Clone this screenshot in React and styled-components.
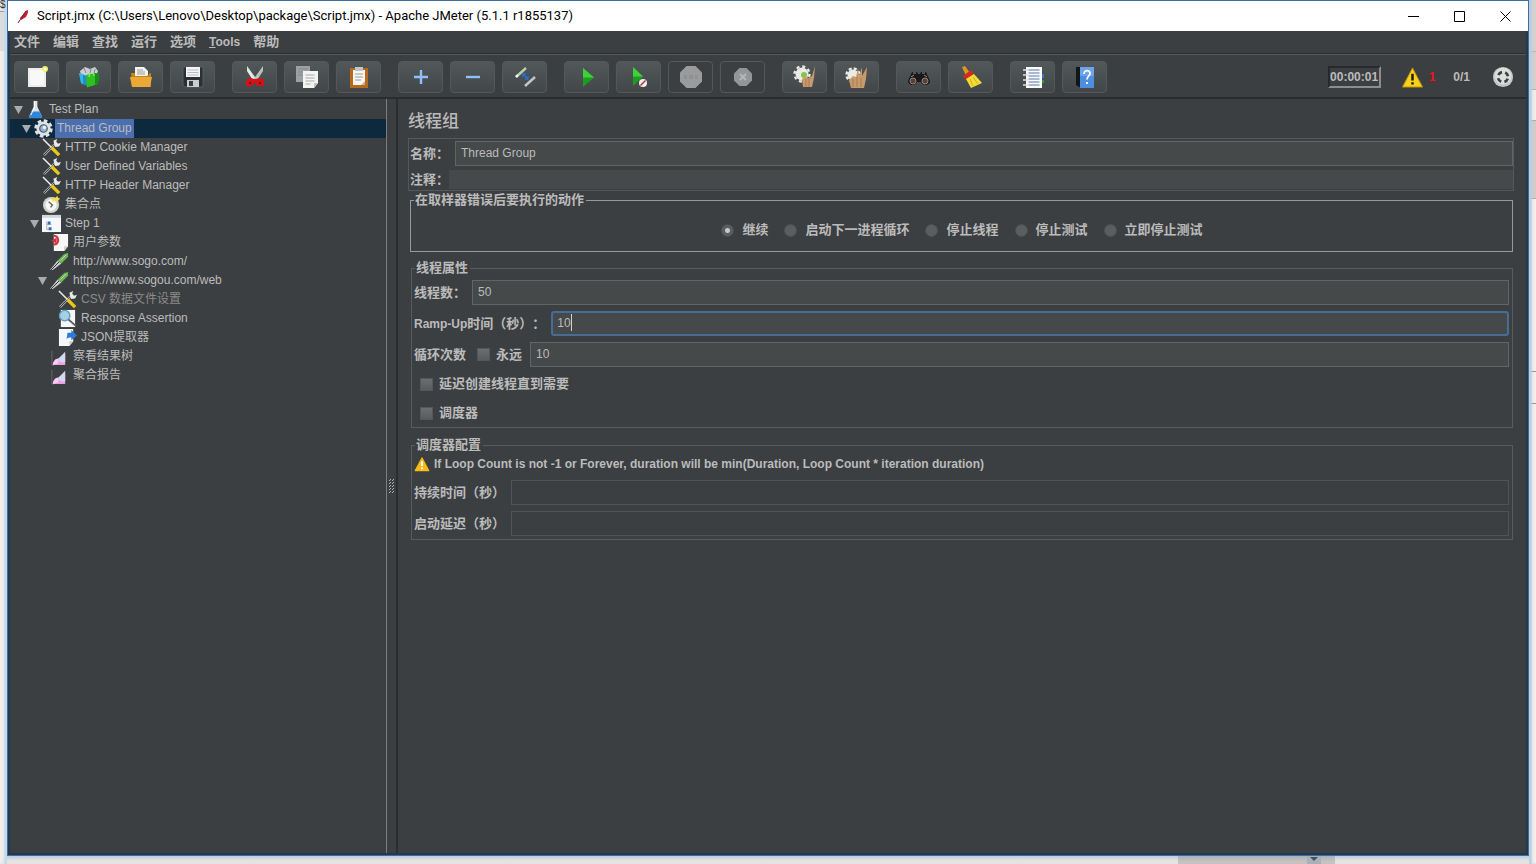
import styled, { createGlobalStyle, css } from "styled-components";
import { useState } from "react";

const GlobalStyle = createGlobalStyle`
  *, *::before, *::after {
    box-sizing: border-box;
  }
  html, body, #root {
    height: 100%;
    margin: 0;
  }
  body {
    overflow: hidden;
    background: #efe8e6;
    color: #bbbbbb;
    font-family: "Liberation Sans", "Noto Sans CJK SC", sans-serif;
    font-size: 12px;
    line-height: 18px;
    text-spacing-trim: space-all;
  }
  button, input {
    font: inherit;
    color: inherit;
    margin: 0;
  }
  svg {
    flex: none;
  }
`;

/* desktop behind the window */

const Desktop = styled.div`
  height: 100%;
  display: grid;
  grid-template-columns: 7px 1fr 7px;
  grid-template-rows: 1fr 8px;
`;

const LeftStrip = styled.div`
  grid-row: 1 / 3;
  background: linear-gradient(#e4e4e4 0 11px, #9a9a9a 11px 12px, #dcdcdc 12px 51px, #f3ece9 51px);
  box-shadow: inset -3px 0 2px #c3d9ea;
  overflow: hidden;
  color: #333;
  font-size: 10px;
  line-height: 9px;
`;

const RightStrip = styled.div`
  grid-column: 3;
  grid-row: 1 / 3;
  box-shadow: inset 3px 0 2px #b9cfe2;
  background: linear-gradient(
    #d6d0ce 0 51px, #bdb8b8 51px 52px, #d4cecc 52px 89px, #b4b0b0 89px 90px,
    #f0ecea 90px 120px, #aeaaaa 120px 121px, #d2cbc8 121px 198px, #aeaaaa 198px 199px,
    #f5edea 199px 371px, #8f9295 371px 372px, #f5edea 372px 403px, #8f9295 403px 404px, #f5edea 404px
  );
`;

const BottomStrip = styled.div`
  grid-column: 2;
  display: flex;
  justify-content: flex-end;
  padding-right: 194px;
  background: linear-gradient(#bccde0, #e6e2e2 60%);
`;

const ScrollTrack = styled.div`
  width: 157px;
  display: flex;
  justify-content: flex-end;
  padding-right: 14px;
  background: linear-gradient(#a4b2c4, #c9c1be 70%);
`;

const ScrollThumb = styled.div`
  width: 14px;
  display: flex;
  justify-content: center;
  background: #aab0b8;
`;

/* window */

const Window = styled.div`
  grid-column: 2;
  grid-row: 1;
  min-width: 0;
  min-height: 0;
  display: flex;
  flex-direction: column;
  border: 1px solid #3f6c98;
`;

const TitleBar = styled.header`
  height: 30px;
  flex: none;
  display: flex;
  align-items: center;
  background: #fff;
  color: #000;
  padding-left: 8px;
  gap: 8px;
`;

const TitleText = styled.h1`
  flex: 1;
  margin: 0;
  font: 400 13px/18px Roboto, "Noto Sans CJK SC", sans-serif;
`;

const WindowButton = styled.button`
  width: 46px;
  height: 28px;
  padding: 0;
  border: none;
  background: none;
  display: flex;
  align-items: center;
  justify-content: center;
`;

const WindowButtons = styled.div`
  display: flex;
`;

const Body = styled.div`
  flex: 1;
  min-height: 0;
  display: flex;
  flex-direction: column;
  background: #3c3f41;
  border: 2px solid #213a50;
  border-top: none;
`;

const MenuBar = styled.nav`
  height: 23px;
  flex: none;
  display: flex;
  align-items: center;
  gap: 13px;
  padding-left: 4px;
  border-bottom: 1px solid #2b2d2e;
`;

const MenuItem = styled.button`
  padding: 0;
  border: none;
  background: none;
  font-weight: bold;
  font-size: ${(props) => (props.$latin ? "12px" : "13px")};
  line-height: 18px;
`;

const ToolBar = styled.div`
  height: 45px;
  flex: none;
  display: flex;
  align-items: center;
  gap: 17px;
  padding: 2px 12px 0 4px;
  border-top: 1px solid #595c5e;
  border-bottom: 2px solid #2a2c2e;
`;

const ToolGroup = styled.div`
  display: flex;
  gap: 7px;
`;

const ToolButton = styled.button`
  width: 45px;
  height: 32px;
  padding: 0;
  display: flex;
  align-items: center;
  justify-content: center;
  border: 1px solid #55585a;
  border-radius: 4px;
  background: linear-gradient(#525759, #434749);
  &:disabled {
    background: #3c3f41;
  }
`;

const Status = styled.div`
  margin-left: auto;
  display: flex;
  align-items: center;
  font-weight: bold;
`;

const Timer = styled.output`
  height: 22px;
  width: 53px;
  text-align: center;
  line-height: 19px;
  border: 2px solid;
  border-color: #27292a #8b8d8e #8b8d8e #27292a;
  margin-right: 20px;
`;

const ErrorCount = styled.span`
  margin: 0 18px 0 5px;
  color: #f0101c;
`;

const ThreadCount = styled.span`
  margin-right: 22px;
`;

const Main = styled.div`
  flex: 1;
  min-height: 0;
  display: grid;
  grid-template-columns: 376px 12px 1fr;
`;

/* test plan tree */

const Tree = styled.ul`
  margin: 0;
  padding: 1px 0 0;
  list-style: none;
`;

const TreeRow = styled.li`
  height: 19px;
  display: flex;
  align-items: center;
  padding-left: ${(props) => 3 + props.$level * 8}px;
  background: ${(props) => (props.$selected ? "#0d293e" : "none")};
`;

const ArrowSlot = styled.span`
  width: 13px;
  flex: none;
  display: flex;
`;

const IconSlot = styled.span`
  width: 19px;
  flex: none;
  display: flex;
  justify-content: center;
`;

const NodeName = styled.span`
  margin-left: 2px;
  padding: 0 2px;
  line-height: 19px;
  white-space: nowrap;
  color: ${(props) => (props.$disabled ? "#8a8a8a" : "#bbbbbb")};
  ${(props) => props.$selected && css`
    background: #4b6eaf;
  `}
`;

const Splitter = styled.div`
  display: flex;
  align-items: center;
  justify-content: center;
  padding-top: 20px;
  border-left: 1px solid #7b7d7f;
  border-right: 2px solid #2a2c2e;
`;

/* thread group editor */

const Editor = styled.main`
  min-width: 0;
  padding: 0 12px 0 10px;
`;

const EditorTitle = styled.h2`
  margin: 0;
  height: 39px;
  font-size: 17px;
  font-weight: 500;
  line-height: 46px;
`;

const NameBox = styled.div`
  display: flex;
  flex-direction: column;
  gap: 4px;
  padding: 2px 0 1px 1px;
  border: 1px solid #55585a;
`;

const FieldRow = styled.div`
  display: flex;
  align-items: center;
  gap: ${(props) => (props.$tight ? "0" : "6px")};
`;

const label = css`
  font-size: 13px;
  font-weight: bold;
  line-height: 18px;
  white-space: nowrap;
`;

const Label = styled.label`
  ${label}
`;

const Latin = styled.span`
  font-size: 12px;
`;

const TextField = styled.input`
  flex: 1;
  min-width: 0;
  height: ${(props) => (props.$flat ? "19px" : "25px")};
  padding: 0 5px 2px;
  outline: none;
  border: 1px solid ${(props) => (props.$flat ? "#45494a" : "#646464")};
  background: #45494a;
  &:disabled {
    background: #3c3f41;
    border-color: #505355;
  }
`;

const FocusedField = styled.div`
  flex: 1;
  height: 25px;
  display: flex;
  align-items: center;
  padding: 0 0 2px 4px;
  border: 2px solid #466d94;
  border-radius: 3px;
  background: #45494a;
`;

const BareInput = styled.input`
  field-sizing: content;
  padding: 0;
  border: none;
  outline: none;
  background: none;
  caret-color: transparent;
`;

const Caret = styled.span`
  width: 1px;
  height: 17px;
  background: #d0d0d0;
`;

const Group = styled.fieldset`
  min-width: 0;
  margin: 0 1px ${(props) => (props.$strong ? "7px 2px" : "8px 3px")};
  padding: 0 3px 3px 2px;
  border: 1px solid ${(props) => (props.$strong ? "#97999b" : "#585b5d")};
`;

const Legend = styled.legend`
  ${label}
  margin-left: 1px;
  padding: 0 2px 0 1px;
`;

const RadioRow = styled.div`
  display: flex;
  justify-content: center;
  gap: 16px;
  padding: 12px 0 9px 2px;
`;

const OptionLabel = styled.label`
  ${label}
  display: flex;
  align-items: center;
  gap: ${(props) => (props.$radio ? "8px" : "6px")};
`;

const Radio = styled.input`
  appearance: none;
  width: 13px;
  height: 13px;
  border-radius: 50%;
  border: 1px solid #4c5052;
  background: #5a5e60;
  &:checked {
    background: radial-gradient(circle, #c8c8c8 0 2px, #5a5e60 3px);
  }
`;

const CheckBox = styled.input`
  appearance: none;
  width: 13px;
  height: 13px;
  border: 1px solid #54585a;
  background: linear-gradient(#6a6e70, #585c5e);
`;

const Rows = styled.div`
  display: flex;
  flex-direction: column;
  gap: 6px;
  padding-top: ${(props) => (props.$top ? "3px" : "0")};
`;

const Checks = styled.div`
  display: flex;
  flex-direction: column;
  gap: 11px;
  padding: 2px 0 2px 6px;
`;

const LoopCheck = styled(OptionLabel)`
  margin: 0 2px 0 5px;
`;

const Warning = styled.p`
  margin: 0;
  height: 20px;
  display: flex;
  align-items: center;
  gap: 4px;
  font-weight: bold;
`;

/* icons */

const Svg = ({ size = 24, children, box = 24 }) => (
  <svg width={size} height={size} viewBox={`0 0 ${box} ${box}`} fill="none" aria-hidden="true">
    {children}
  </svg>
);

const icons = {
  new: (
    <>
      <path d="M3 3h18v19H3z" fill="#ececea" />
      <path d="M5 5h14v15H5z" fill="#f8f8f6" />
      <circle cx="20" cy="4" r="3" fill="#f2ee6a" />
      <circle cx="20" cy="4" r="1.3" fill="#fff" />
    </>
  ),
  templates: (
    <>
      <path d="M3 6l5-4 5 2 5-2 3 4-2 5H4z" fill="#c9ced2" />
      <path d="M7 3l2 5M14 3l-1 6M18 4l-1 5" stroke="#7f8890" />
      <path d="M2 8l8 3v10l-6-3z" fill="#1e8fc9" />
      <path d="M2 8l4 1.5v10L4 18z" fill="#35b6e2" />
      <path d="M9 10l10-2 3 1-1 10-11 3.500z" fill="#2fc01f" />
      <path d="M18 8l4 1-1 10-3 1z" fill="#178c18" />
      <path d="M12 12c0-5 5-6 5-1" stroke="#a9f08e" />
    </>
  ),
  open: (
    <>
      <path d="M6 2h9l4 4v8H6z" fill="#f4f4f2" />
      <path d="M8 5h6M8 7h8M8 9h8" stroke="#9a9a9a" />
      <path d="M2 8h4v3h12l3-3h1v14H3z" fill="#c98212" />
      <path d="M1 12h22l-2 10H3z" fill="#eaa837" />
    </>
  ),
  save: (
    <>
      <path d="M2 2h20v20H4l-2-2z" fill="#2b3035" stroke="#565c62" />
      <path d="M5 2h14v10H5z" fill="#f4f4f4" />
      <path d="M6.500 5h11M6.500 7.500h11M6.500 10h11" stroke="#b8bcc0" />
      <path d="M6 15h12v7H6z" fill="#c9cdd0" />
      <path d="M8 16h4v5H8z" fill="#3a3e42" />
    </>
  ),
  cut: (
    <>
      <path d="M4 1l10 14-3 2L4 6z" fill="#e4e9e4" />
      <path d="M20 1L10 15l3 2 7-11z" fill="#b8c2bd" />
      <path d="M11 14l-3-1c-4 0-6 3-5 7 3 3 8 1 9-3 1 4 6 6 9 3 1-4-1-7-5-7l-3 1z" fill="#d4121a" />
      <circle cx="7" cy="18" r="1.200" fill="#7a1216" />
      <circle cx="17" cy="18" r="1.200" fill="#7a1216" />
    </>
  ),
  copy: (
    <>
      <path d="M1 1h14v16H1z" fill="#9da1a3" />
      <path d="M3 4h10M3 7h10M3 10h5" stroke="#85898b" />
      <path d="M8 6h15v12l-4 5H8z" fill="#f3f3f1" />
      <path d="M10.500 10h9M10.500 13h9M10.500 16h9M10.500 19h5" stroke="#a7aaac" />
      <path d="M23 18h-4v5z" fill="#bfc2c4" />
    </>
  ),
  paste: (
    <>
      <path d="M3 3h18v20H3z" fill="#b8691c" />
      <path d="M6 5h12v15H6z" fill="#f6f6f2" />
      <path d="M8 2h8v4H8z" fill="#c3c7c9" />
      <path d="M8 9h8M8 12h8M8 15h6" stroke="#9a9d9f" />
      <path d="M18 16l-4 4h4z" fill="#b5b5b0" />
    </>
  ),
  plus: <path d="M12 5v14M5 12h14" stroke="#8fc0fa" strokeWidth="2.400" />,
  minus: <path d="M5 12h14" stroke="#8fc0fa" strokeWidth="2.400" />,
  toggle: (
    <>
      <path d="M3 12L13 3" stroke="#b9cfae" strokeWidth="2.400" />
      <path d="M3 12l2-2" stroke="#f4f4f4" strokeWidth="2.400" />
      <path d="M12 21L22 12" stroke="#c3c8c6" strokeWidth="2.400" />
      <path d="M10 9l5 5M15 11v3h-3M10 12V9h3" stroke="#2c6fd0" strokeWidth="1.400" />
    </>
  ),
  start: (
    <>
      <path d="M8 3l11 9.500L8 22z" fill="#18a01e" />
      <path d="M8 3l11 9.500H8z" fill="#42cf3c" />
    </>
  ),
  startNoPause: (
    <>
      <path d="M6 2l10 9.500L6 21z" fill="#18a01e" />
      <path d="M6 2l10 9.500H6z" fill="#42cf3c" />
      <circle cx="16" cy="18" r="4" fill="#eeeeee" />
      <path d="M13.500 20.500l5-5" stroke="#c02a2a" strokeWidth="1.400" />
    </>
  ),
  stop: (
    <>
      <path d="M7.500 1h9L23 7.500v9L16.500 23h-9L1 16.500v-9z" fill="#999b9c" />
      <path d="M5 10h3v4H5zM10 10h4v4h-4zM16 10h3v4h-3z" fill="#8f9192" />
    </>
  ),
  shutdown: (
    <>
      <path d="M8.500 3h7l5.500 5.500v7L15.500 21h-7L3 15.500v-7z" fill="#939596" />
      <path d="M9 9l6 6M15 9l-6 6" stroke="#b4b6b7" strokeWidth="2" />
    </>
  ),
  clear: (
    <>
      <circle cx="9" cy="9" r="6.500" fill="#e8ebe6" />
      <circle cx="9" cy="9" r="7.500" stroke="#e8ebe6" strokeWidth="2.400" strokeDasharray="3 2.900" />
      <circle cx="11" cy="10" r="3" fill="#8bc34a" />
      <path d="M9 14l3-2 4 1 3-2 3-10-1 12-2 9h-9z" fill="#c79a6b" />
      <path d="M13 14v8M16 13v9" stroke="#a87c50" />
    </>
  ),
  clearAll: (
    <>
      <circle cx="8" cy="10" r="5.500" fill="#e8ebe6" />
      <circle cx="8" cy="10" r="6.500" stroke="#e8ebe6" strokeWidth="2.400" strokeDasharray="3 2.100" />
      <path d="M4 15l4-4 3 1 2-9 1 8 3-9v9l5-9-1 12-2 9H6z" fill="#c79a6b" />
      <path d="M8 14v8M12 12v10M16 13v9" stroke="#a87c50" />
    </>
  ),
  search: (
    <>
      <path d="M5 7h5l1 2h2l1-2h5l4 9c0 5-8 5-9 1h-4c-1 4-9 4-9-1z" fill="#18191a" />
      <path d="M6 8h3M15 8h3M4 12l3-2M20 12l-3-2" stroke="#8b8d8e" />
      <circle cx="6" cy="16" r="3" fill="#5b4038" stroke="#9a8278" />
      <circle cx="18" cy="16" r="3" fill="#5b4038" stroke="#9a8278" />
    </>
  ),
  broom: (
    <>
      <path d="M3 2l3-1 5 7-4 3z" fill="#dc9526" />
      <path d="M4 11l8-6 3 4-8 6z" fill="#d22b1c" />
      <path d="M7 14l8-5 8 9-11 5z" fill="#f4dc35" />
      <path d="M11 14l3 7M14 12l5 7" stroke="#cfae18" />
    </>
  ),
  functions: (
    <>
      <path d="M5 2h16v21H5z" fill="#fafafa" />
      <path d="M7.500 5h11M7.500 8h11M7.500 11h11M7.500 14h11M7.500 17h11M7.500 20h11" stroke="#5577aa" />
      <path d="M2 5h5M2 10h5M2 15h5M2 20h5" stroke="#e0e0e0" strokeWidth="1.600" />
      <path d="M21 9h2v4h-2z" fill="#2478d0" />
      <path d="M21 15h2v3h-2z" fill="#2c9a3a" />
    </>
  ),
  help: (
    <>
      <path d="M3 2h5v21l-5-3z" fill="#11161c" />
      <path d="M7 2h14v21H7z" fill="#4e8ede" />
      <path d="M7 2h14v9H7z" fill="#6ba4ea" />
      <path d="M11 9c0-5 7-4 6 0-.5 2-3 2-3 5.500M14 17v2" stroke="#fff" strokeWidth="1.800" />
    </>
  ),
};

const Feather = () => (
  <Svg size={13} box={13}>
    <path d="M11 0c2 0 1 3-1 7L5 10 4 8z" fill="#c61f2d" />
    <path d="M10 1L2 13" stroke="#6b1e3a" />
  </Svg>
);

const Alert = ({ size }) => (
  <Svg size={size}>
    <path d="M12 2l10.500 20h-21z" fill="#f6d21b" stroke="#b98d08" strokeLinejoin="round" />
    <path d="M12 8v7M12 17v2.400" stroke="#1d1a0c" strokeWidth="2.600" />
  </Svg>
);

const LightAlert = () => (
  <Svg size={16}>
    <path d="M12 3l10 19H2z" fill="#fbb917" stroke="#fbb917" strokeWidth="2" strokeLinejoin="round" />
    <path d="M12 8v7M12 17v3" stroke="#fff" strokeWidth="2.800" />
  </Svg>
);

const Grip = () => (
  <svg width="7" height="17" viewBox="0 0 7 17" aria-hidden="true">
    <path
      d="M1 3l2-2M4 3l2-2M1 6l2-2M4 6l2-2M1 9l2-2M4 9l2-2M1 12l2-2M4 12l2-2M1 15l2-2M4 15l2-2"
      stroke="#b0b2b3"
    />
  </svg>
);

const RemoteIcon = () => (
  <Svg size={22}>
    <circle cx="12" cy="12" r="11" fill="#c6c8c8" />
    <circle cx="12" cy="11" r="9" fill="#dddede" />
    <circle cx="12" cy="12" r="5.500" stroke="#3c4142" strokeWidth="3" strokeDasharray="5 3.640" strokeDashoffset="-1.820" />
  </Svg>
);

const nodeIcons = {
  plan: (
    <>
      <path d="M8 1h4v6l5 11-2 1H5l-2-1L8 7z" fill="#d9e4ec" />
      <path d="M6 12h8l3 6-2 1H5l-2-1z" fill="#2d86dc" />
      <path d="M9 1v7l-4 8" stroke="#fff" />
    </>
  ),
  gear: (
    <>
      <circle cx="10" cy="10" r="7.500" fill="#dfe3e6" />
      <circle cx="10" cy="10" r="8.200" stroke="#dfe3e6" strokeWidth="3" strokeDasharray="3.800 2.640" />
      <circle cx="10" cy="10" r="4" fill="#8fb4d8" stroke="#4d5a68" strokeWidth="1.200" />
      <circle cx="11" cy="9" r="1.800" fill="#e8f3fc" />
    </>
  ),
  tools: (
    <>
      <path d="M2 18L14 6" stroke="#a9adb0" strokeWidth="2.400" />
      <path d="M1.500 18.500L13 7" stroke="#34383a" />
      <path d="M13 7l-1-4 4-2-1 3 2 2 3-1-2 4-4 .5z" fill="#e8eaeb" />
      <path d="M1 1l9 9" stroke="#eceeee" strokeWidth="1.600" />
      <path d="M10 10l8 8" stroke="#e8c81e" strokeWidth="3.600" />
    </>
  ),
  timer: (
    <>
      <circle cx="9.500" cy="10.500" r="8.500" fill="#d2d2ce" />
      <circle cx="9.500" cy="10.500" r="6" fill="#f6f6f2" />
      <path d="M7 7l4 3.500L9 13" stroke="#60605c" strokeWidth="1.400" />
      <path d="M11 2l3 1 2-2 1 2 2 1-2 2v2l-3-2-3 1z" fill="#f2df4c" />
    </>
  ),
  controller: (
    <>
      <path d="M0 1h20v18H0z" fill="#f7f8fa" />
      <path d="M0 1h20v3H0z" fill="#cfd6df" />
      <path d="M5 8v9M5 11h5M5 16h5" stroke="#a5b4c6" />
      <path d="M6 8h3v3H6zM7 14h3v3H7z" fill="#2d6fc0" />
    </>
  ),
  userParams: (
    <>
      <path d="M4 1h15v13l-4 5H4z" fill="#f8f7f7" />
      <path d="M19 14h-4v5z" fill="#c7c9cc" />
      <path d="M4 3c6-1 6 10 0 9" stroke="#cc3c46" strokeWidth="2.400" />
      <path d="M1 8l6-3v6z" fill="#d8303b" />
    </>
  ),
  sampler: (
    <>
      <path d="M0 19l8-10 4 3-9 7z" fill="#c9cecb" />
      <path d="M1 19L10 10" stroke="#2e3233" />
      <path d="M8 9l7-7 4-1v4l-7 7z" fill="#6db357" />
      <path d="M11 9l6-6" stroke="#b7e3a4" />
    </>
  ),
  assertion: (
    <>
      <path d="M3 1h15v18H3z" fill="#f6f7f8" />
      <circle cx="7" cy="7" r="5.500" fill="#a4d0e6" stroke="#5f9cbd" strokeWidth="1.400" />
      <path d="M11 11l8 7" stroke="#5d6163" strokeWidth="2" />
    </>
  ),
  extractor: (
    <>
      <path d="M1 1h15v13l-4 5H1z" fill="#f6f7f8" />
      <path d="M16 14h-4v5z" fill="#c7c9cc" />
      <path d="M10 5h4V2l6 6-6 5v-3c-2 0-4 0-5 2z" fill="#2b7cd6" />
    </>
  ),
  listener: (
    <>
      <path d="M2 4v15h2" stroke="#66696b" />
      <path d="M3 19c0-4 3-7 6-7l7-4v11z" fill="#ef9fe0" />
      <path d="M3 19c0-4 3-7 6-7v5z" fill="#f8d0f0" />
      <path d="M9 12l7-7v11c-4 1-7-1-7-4z" fill="#d3d9f4" />
    </>
  ),
};

const tools = [
  ["new", "templates", "open", "save"],
  ["cut", "copy", "paste"],
  ["plus", "minus", "toggle"],
  ["start", "startNoPause", "stop", "shutdown"],
  ["clear", "clearAll"],
  ["search", "broom"],
  ["functions", "help"],
];

const nodes = [
  { level: 0, icon: "plan", name: "Test Plan", open: true },
  { level: 1, icon: "gear", name: "Thread Group", open: true, selected: true },
  { level: 2, icon: "tools", name: "HTTP Cookie Manager" },
  { level: 2, icon: "tools", name: "User Defined Variables" },
  { level: 2, icon: "tools", name: "HTTP Header Manager" },
  { level: 2, icon: "timer", name: "集合点" },
  { level: 2, icon: "controller", name: "Step 1", open: true },
  { level: 3, icon: "userParams", name: "用户参数" },
  { level: 3, icon: "sampler", name: "http://www.sogo.com/" },
  { level: 3, icon: "sampler", name: "https://www.sogou.com/web", open: true },
  { level: 4, icon: "tools", name: "CSV 数据文件设置", disabled: true },
  { level: 4, icon: "assertion", name: "Response Assertion" },
  { level: 4, icon: "extractor", name: "JSON提取器" },
  { level: 3, icon: "listener", name: "察看结果树" },
  { level: 3, icon: "listener", name: "聚合报告" },
];

const errorActions = ["继续", "启动下一进程循环", "停止线程", "停止测试", "立即停止测试"];

const TestTree = () => (
  <Tree>
    {nodes.map((node, index) => (
      <TreeRow key={index} $level={node.level} $selected={node.selected}>
        <ArrowSlot>
          {node.open && (
            <Svg size={11} box={11}>
              <path d="M1 2h9L5.500 10z" fill="#a9abac" />
            </Svg>
          )}
        </ArrowSlot>
        <IconSlot>
          <Svg size={19} box={20}>{nodeIcons[node.icon]}</Svg>
        </IconSlot>
        <NodeName $selected={node.selected} $disabled={node.disabled}>{node.name}</NodeName>
      </TreeRow>
    ))}
  </Tree>
);

const ThreadGroupEditor = () => {
  const [action, setAction] = useState("继续");
  const [form, setForm] = useState({ name: "Thread Group", comment: "", threads: "50", rampUp: "10", loops: "10" });

  const bind = (key) => ({
    id: key,
    value: form[key],
    onChange: (e) => setForm({ ...form, [key]: e.target.value }),
  });

  return (
    <Editor>
      <EditorTitle>线程组</EditorTitle>
      <NameBox>
        <FieldRow>
          <Label htmlFor="name">名称：</Label>
          <TextField {...bind("name")} />
        </FieldRow>
        <FieldRow $tight>
          <Label htmlFor="comment">注释：</Label>
          <TextField $flat {...bind("comment")} />
        </FieldRow>
      </NameBox>

      <Group $strong>
        <Legend>在取样器错误后要执行的动作</Legend>
        <RadioRow>
          {errorActions.map((name) => (
            <OptionLabel key={name} $radio>
              <Radio type="radio" name="action" checked={action === name} onChange={() => setAction(name)} />
              {name}
            </OptionLabel>
          ))}
        </RadioRow>
      </Group>

      <Group>
        <Legend>线程属性</Legend>
        <Rows $top>
          <FieldRow>
            <Label htmlFor="threads">线程数：</Label>
            <TextField {...bind("threads")} />
          </FieldRow>
          <FieldRow>
            <Label htmlFor="rampUp"><Latin>Ramp-Up</Latin>时间（秒）：</Label>
            <FocusedField>
              <BareInput {...bind("rampUp")} />
              <Caret />
            </FocusedField>
          </FieldRow>
          <FieldRow>
            <Label htmlFor="loops">循环次数</Label>
            <LoopCheck>
              <CheckBox type="checkbox" />
              永远
            </LoopCheck>
            <TextField {...bind("loops")} />
          </FieldRow>
          <Checks>
            <OptionLabel>
              <CheckBox type="checkbox" />
              延迟创建线程直到需要
            </OptionLabel>
            <OptionLabel>
              <CheckBox type="checkbox" />
              调度器
            </OptionLabel>
          </Checks>
        </Rows>
      </Group>

      <Group>
        <Legend>调度器配置</Legend>
        <Rows>
          <Warning>
            <LightAlert />
            If Loop Count is not -1 or Forever, duration will be min(Duration, Loop Count * iteration duration)
          </Warning>
          <FieldRow>
            <Label htmlFor="duration">持续时间（秒）</Label>
            <TextField id="duration" disabled />
          </FieldRow>
          <FieldRow>
            <Label htmlFor="delay">启动延迟（秒）</Label>
            <TextField id="delay" disabled />
          </FieldRow>
        </Rows>
      </Group>
    </Editor>
  );
};

const App = () => (
  <>
    <GlobalStyle />
    <Desktop>
      <LeftStrip>$</LeftStrip>
      <Window>
        <TitleBar>
          <Feather />
          <TitleText>Script.jmx (C:\Users\Lenovo\Desktop\package\Script.jmx) - Apache JMeter (5.1.1 r1855137)</TitleText>
          <WindowButtons>
            <WindowButton aria-label="Minimize">
              <Svg size={11} box={11}><path d="M0 5.500h11" stroke="#000" /></Svg>
            </WindowButton>
            <WindowButton aria-label="Maximize">
              <Svg size={11} box={11}><path d="M.5.5h10v10H.5z" stroke="#000" /></Svg>
            </WindowButton>
            <WindowButton aria-label="Close">
              <Svg size={11} box={11}><path d="M.5.5l10 10M10.500.5l-10 10" stroke="#000" /></Svg>
            </WindowButton>
          </WindowButtons>
        </TitleBar>
        <Body>
          <MenuBar>
            <MenuItem>文件</MenuItem>
            <MenuItem>编辑</MenuItem>
            <MenuItem>查找</MenuItem>
            <MenuItem>运行</MenuItem>
            <MenuItem>选项</MenuItem>
            <MenuItem $latin><u>T</u>ools</MenuItem>
            <MenuItem>帮助</MenuItem>
          </MenuBar>
          <ToolBar>
            {tools.map((group) => (
              <ToolGroup key={group[0]}>
                {group.map((name) => (
                  <ToolButton key={name} aria-label={name} disabled={name === "stop" || name === "shutdown"}>
                    <Svg>{icons[name]}</Svg>
                  </ToolButton>
                ))}
              </ToolGroup>
            ))}
            <Status>
              <Timer>00:00:01</Timer>
              <Alert size={23} />
              <ErrorCount>1</ErrorCount>
              <ThreadCount>0/1</ThreadCount>
              <RemoteIcon />
            </Status>
          </ToolBar>
          <Main>
            <TestTree />
            <Splitter>
              <Grip />
            </Splitter>
            <ThreadGroupEditor />
          </Main>
        </Body>
      </Window>
      <BottomStrip>
        <ScrollTrack>
          <ScrollThumb>
            <Svg size={8} box={8}><path d="M0 1h8L4 5z" fill="#3f5266" /></Svg>
          </ScrollThumb>
        </ScrollTrack>
      </BottomStrip>
      <RightStrip />
    </Desktop>
  </>
);

export default App;
